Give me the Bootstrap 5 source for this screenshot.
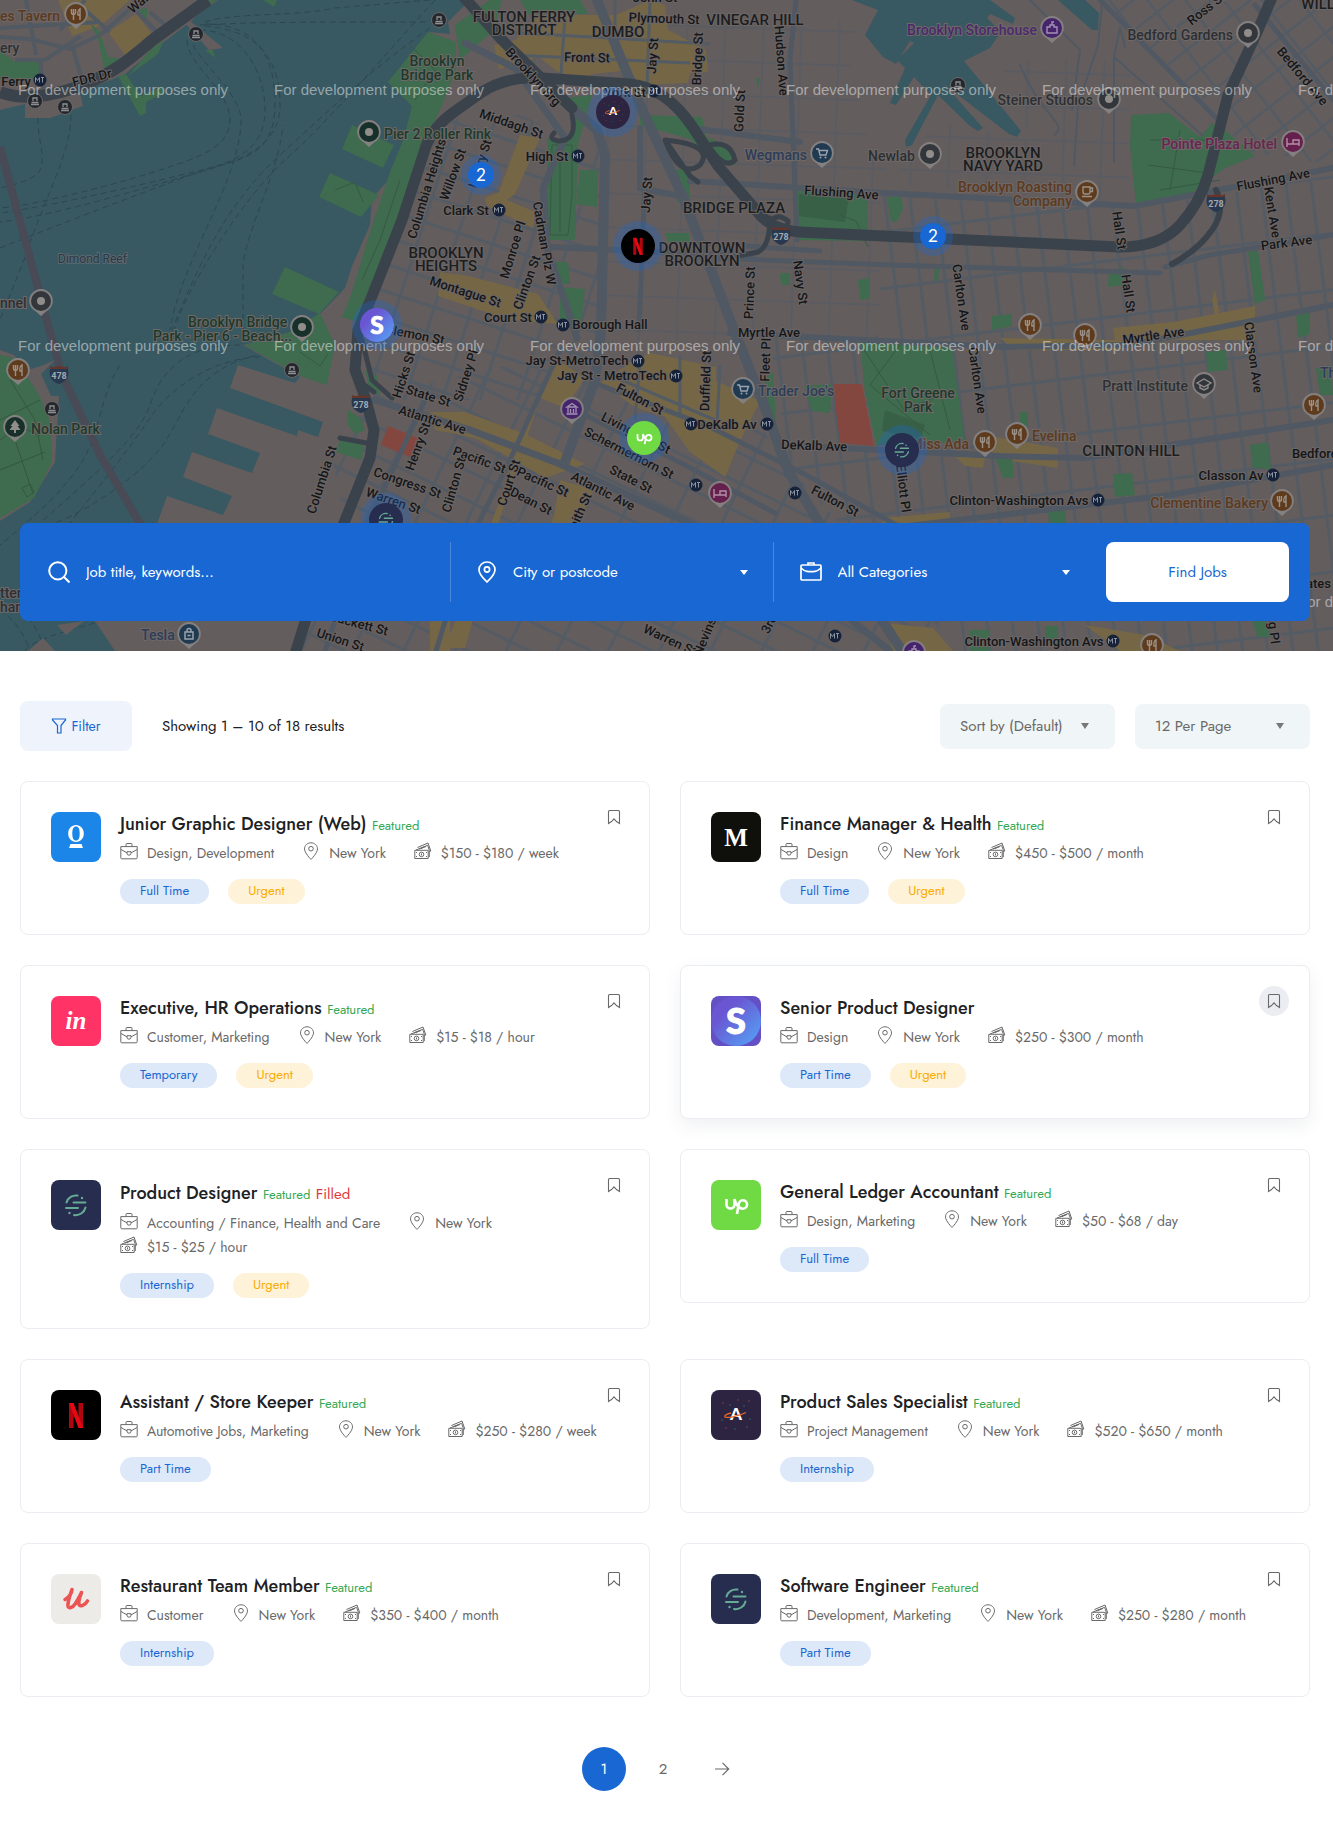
<!DOCTYPE html>
<html lang="en">
<head>
<meta charset="utf-8">
<meta name="viewport" content="width=device-width, initial-scale=1">
<title>Find Jobs</title>
<link href="https://cdn.jsdelivr.net/npm/bootstrap@5.3.0/dist/css/bootstrap.min.css" rel="stylesheet">
<style>
  :root { --brand: #1967d2; --ink: #202124; --muted: #696969; }
  body { font-family: Jost, Lato, sans-serif; font-size: 14px; line-height: 24px; color: var(--muted); background: #fff; }
  .page-pad { padding-left: 20px; padding-right: 23px; }
  .sprite { position: absolute; width: 0; height: 0; }

  /* map hero */
  .map-hero { position: relative; min-height: 651px; padding-bottom: 30px; background: #385862; overflow: hidden; }
  .map-art { position: absolute; inset: 0; width: 100%; height: 100%; }
  .map-art text { font-family: Roboto, sans-serif; }
  .lbl text { font-size: 13px; font-weight: 500; fill: #14171a; stroke: #6c6564; stroke-width: 2px; paint-order: stroke; text-anchor: middle; }
  .area text { font-size: 15px; font-weight: 500; fill: #1b1e21; stroke: #6c6564; stroke-width: 2px; paint-order: stroke; text-anchor: middle; }
  .poi text { font-size: 14px; font-weight: 500; fill: #2c3034; stroke: #6f6867; stroke-width: 2px; paint-order: stroke; }
  .poi .food { fill: #5c3a20; } .poi .shop { fill: #2c3d57; } .poi .fun { fill: #4a2a6b; } .poi .stay { fill: #6a2450; } .poi .green { fill: #1d3a2b; } .poi .reef { fill: #2d3747; font-size: 12px; font-weight: 400; stroke: #5b686d; }
  .poi .end { text-anchor: end; } .poi .mid { text-anchor: middle; }
  .map-art .wm text { font: 15px "Liberation Sans", Arial, sans-serif; fill: #fff; fill-opacity: .48; }
  .map-art .num { font: 17px Lato, sans-serif; fill: #fff; text-anchor: middle; }

  /* search bar */
  .search-bar { position: relative; background: var(--brand); border-radius: 8px; padding: 19px 0; color: #fff; }
  .search-cell { height: 60px; padding-left: 28px; padding-right: 24px; gap: 16px; }
  .search-cell + .search-cell { border-left: 1px solid #4a87dc; padding-left: 26px; }
  .search-cell svg { height: 22px; flex: none; }
  .search-cell .form-control, .search-cell .form-select { background-color: transparent; border: 0; padding: 0; color: #fff; font-size: 15px; box-shadow: none; height: 60px; border-radius: 0; }
  .search-cell .form-control::placeholder { color: #fff; opacity: 1; }
  .search-cell .form-select { background-image: url("data:image/svg+xml,%3Csvg xmlns='http://www.w3.org/2000/svg' viewBox='0 0 8 5'%3E%3Cpath fill='%23fff' d='M0 0h8L4 5z'/%3E%3C/svg%3E"); background-size: 8px 5px; background-position: right 1px center; }
  .search-cell option { color: var(--ink); }
  .search-action { padding: 0 21px 0 11px; }
  .btn-find { height: 60px; border-radius: 8px; background: #fff; color: var(--brand); font-size: 15px; }
  .btn-find:hover { background: #eef4fd; color: var(--brand); }

  /* toolbar */
  .toolbar { padding-top: 50px; margin-bottom: 30px; }
  .btn-filter { width: 112px; height: 50px; border-radius: 8px; background: #eef3fc; color: var(--brand); font-size: 14px; }
  .result-count { color: var(--ink); font-size: 15px; margin-left: 30px; }
  .tool-group { gap: 20px; }
  .tool-select { width: 175px; height: 45px; border: 0; border-radius: 8px; color: var(--muted); font-size: 15px; padding: 0 36px 0 20px; background-color: #f0f5f7; background-size: 8px 6px; background-position: right 26px center;
    background-image: url("data:image/svg+xml,%3Csvg xmlns='http://www.w3.org/2000/svg' viewBox='0 0 8 6'%3E%3Cpath fill='%23777' d='M0 0h8L4 6z'/%3E%3C/svg%3E"); }

  /* job cards */
  .job-list { --bs-gutter-x: 30px; --bs-gutter-y: 30px; margin-top: -30px; }
  .job-card { position: relative; border: 1px solid #ecedf2; border-radius: 8px; padding: 30px; gap: 19px; background: #fff; }
  .job-card.is-active { box-shadow: 0 7px 18px rgba(64, 79, 104, .08); }
  .job-logo { width: 50px; height: 50px; flex: none; border-radius: 8px; }
  .job-title { font-size: 18px; line-height: 24px; margin-bottom: 5px; color: var(--ink); font-weight: 500; }
  .job-title a { color: inherit; text-decoration: none; }
  .job-title span { line-height: 16px; }
  .job-title.tall { line-height: 26px; }
  .flag-featured { font-size: 13px; font-weight: 400; color: #34a853; }
  .flag-filled { font-size: 15px; font-weight: 400; color: #e1383b; }
  .job-meta { column-gap: 28px; margin-bottom: 14px; font-size: 14px; }
  .job-meta span { display: flex; align-items: center; height: 24px; }
  .job-meta svg { width: 18px; height: 18px; margin-right: 9px; margin-bottom: 4px; }
  .job-tags { gap: 19px; }
  .job-tag { height: 25px; line-height: 24px; padding: 0 20px; border-radius: 25px; font-size: 13px; text-decoration: none; background: #dde8f8; color: var(--brand); }
  .job-tag.urgent { background: #fef2d9; color: #f9ab00; }
  .btn-save { position: absolute; top: 20px; right: 20px; width: 30px; height: 30px; border: 0; border-radius: 50%; background: none; color: var(--muted); }
  .btn-save svg { width: 14px; height: 16px; }
  .is-active .btn-save { background: #ecedf2; }

  .pager { margin: 50px 0; gap: 16px; font-size: 15px; padding-right: 4px; }
  .pager .page-item .page-link { width: 44px; height: 44px; padding: 0; border: 0; border-radius: 50%; color: var(--muted); background: none; font-size: 15px; }
  .pager .page-item.active .page-link { background: var(--brand); color: #fff; }
</style>
<script src="https://cdn.jsdelivr.net/npm/bootstrap@5.3.0/dist/js/bootstrap.bundle.min.js" defer></script>
</head>
<body>

<svg class="sprite" aria-hidden="true">
  <defs>
    <linearGradient id="gS" x1="0" y1="0" x2="1" y2="1"><stop offset=".3" stop-color="#6a56d2"/><stop offset="1" stop-color="#53a7f8"/></linearGradient>
  </defs>
  <!-- interface icons -->
  <symbol id="i-case" viewBox="0 0 18 18" fill="none" stroke="currentColor"><path d="M.8 4.6h16.4v11.2a1 1 0 0 1-1 1H1.800a1 1 0 0 1-1-1zM6 4.300V2.500a1 1 0 0 1 1-1h4a1 1 0 0 1 1 1v1.800M1 7.500l6 3.400M17 7.500l-6 3.400M7 9.700h4v1.500a2 2 0 0 1-4 0z"/></symbol>
  <symbol id="i-pin" viewBox="0 0 18 18" fill="none" stroke="currentColor"><path d="M9 .8C5.300.8 2.500 3.500 2.500 6.900 2.500 11 9 17.400 9 17.400S15.500 11 15.500 6.900C15.500 3.500 12.700.8 9 .8z"/><circle cx="9" cy="6.700" r="2.300"/></symbol>
  <symbol id="i-cash" viewBox="0 0 18 18" fill="none" stroke="currentColor"><path d="M.8 8.300h13.400v8.200H.8zM2 8 13.600 3.300l1.700 4.800v7M3.500 5.500 14 1l2.800 8-1.500.7"/><circle cx="7.500" cy="12.400" r="2.300"/><path d="M2.500 10v1M12.500 10v1M2.500 14v1M12.500 14v1M5 7l5-2M7 6.500l5-2M7.500 11.400v2"/></symbol>
  <symbol id="i-mark" viewBox="0 0 14 16" fill="none" stroke="currentColor"><path d="M1.500 14.500v-12a1 1 0 0 1 1-1h9a1 1 0 0 1 1 1v12L9.500 12.500 7 9.800 4.500 12.500z" stroke-width="1.100"/></symbol>
  <!-- company marks -->
  <symbol id="l-o" viewBox="0 0 50 50"><rect width="50" height="50" fill="#1c86e8"/><path fill-rule="evenodd" d="M25 13c4.500 0 7.800 3.600 7.800 8.500S29.500 30 25 30s-7.800-3.600-7.800-8.500S20.500 13 25 13zm0 1.500c-2.600 0-3.700 2.600-3.700 7s1.100 7 3.700 7 3.700-2.600 3.700-7-1.100-7-3.700-7zM18 36l1.500-4h11l1.500 4z" fill="#fff"/></symbol>
  <symbol id="l-m" viewBox="0 0 50 50"><rect width="50" height="50" fill="#0f0f0b"/><text x="25" y="33.500" text-anchor="middle" font-family="Liberation Serif" font-weight="bold" font-size="25" fill="#fff">M</text></symbol>
  <symbol id="l-in" viewBox="0 0 50 50"><rect width="50" height="50" fill="#ff3366"/><text x="25" y="33" text-anchor="middle" font-family="Liberation Serif" font-style="italic" font-weight="bold" font-size="25" fill="#fff">in</text></symbol>
  <symbol id="l-s" viewBox="0 0 50 50"><rect width="50" height="50" fill="#6350c4"/><circle cx="25" cy="25" r="25" fill="url(#gS)"/><text x="25" y="38" text-anchor="middle" font-family="Lato" font-weight="900" font-size="36" fill="#fff" stroke="#fff">S</text></symbol>
  <symbol id="l-seg" viewBox="0 0 50 50"><rect width="50" height="50" fill="#262d4f"/><g fill="none" stroke="#66ac94" stroke-width="2" stroke-linecap="round"><path d="M15.500 22.500a10 10 0 0 1 11-7M34.500 27.500a10 10 0 0 1-11.500 7.500M22.500 22.500h12M15 28h12"/></g><circle cx="31" cy="18" r="1.200" fill="#66ac94"/><circle cx="18.500" cy="33" r="1.200" fill="#66ac94"/></symbol>
  <symbol id="l-up" viewBox="0 0 50 50"><rect width="50" height="50" fill="#6fda44"/><path d="M15.500 19v5.500a4 4 0 0 0 8 0V19c1 4 3 7.500 5.500 9.500M26 34l1.800-10.500a4.200 4.200 0 1 1 4 5.200c-2 0-3.500-1-5-3" fill="none" stroke="#fff" stroke-width="2.600"/></symbol>
  <symbol id="l-n" viewBox="0 0 50 50"><rect width="50" height="50"/><rect x="18" y="13" width="4.500" height="25" fill="#b1060f"/><rect x="27.500" y="13" width="4.500" height="25" fill="#b1060f"/><path d="M18 13h4.500L32 38h-4.500z" fill="#e50914"/></symbol>
  <symbol id="l-a" viewBox="0 0 50 50"><rect width="50" height="50" fill="#2c2440"/><g fill="#a14a3d"><circle cx="12" cy="13" r=".7"/><circle cx="38" cy="11" r=".7"/><circle cx="36" cy="37" r=".7"/><circle cx="15" cy="38" r=".7"/><circle cx="27" cy="10" r=".7"/></g><g fill="#2b7a6c"><circle cx="19" cy="15" r=".7"/><circle cx="33" cy="16" r=".7"/><circle cx="11" cy="30" r=".7"/><circle cx="39" cy="29" r=".7"/><circle cx="24" cy="39" r=".7"/></g><text x="25" y="30" text-anchor="middle" font-family="Lato" font-weight="900" font-size="17" fill="#fff">A</text><path d="M20 23c-5 1-7 3-6 4 3 1.500 14-1 21-4.500" fill="none" stroke="#e8682c" stroke-width="1.300"/></symbol>
  <symbol id="l-u" viewBox="0 0 50 50"><rect width="50" height="50" fill="#edebe7"/><path d="M14 25.500c4-2 6.500-5.500 7-10-2 6-4.500 12-4 16.500.5 3 4.500 2 7.500-2.500 2-3.300 4.500-7.500 6-11-2 5-3.500 9-2.500 12 1 2.500 6 1 8.500-3.500" fill="none" stroke="#ec5453" stroke-width="3.600" stroke-linecap="round" stroke-linejoin="round"/></symbol>
</svg>

<header class="map-hero d-flex flex-column justify-content-end page-pad">
<svg class="map-art" viewBox="0 0 1333 651" preserveAspectRatio="xMidYMid slice" role="img" aria-label="Map of jobs in Brooklyn">
  <defs>
    <pattern id="gH" width="36" height="26" patternUnits="userSpaceOnUse" patternTransform="rotate(18)"><path d="M0 2H36M4 0V26" stroke="#535b64" stroke-width="3"/></pattern>
    <pattern id="gB" width="46" height="27" patternUnits="userSpaceOnUse" patternTransform="rotate(26)"><path d="M0 2H46M4 0V27" stroke="#535b64" stroke-width="3"/></pattern>
    <pattern id="gD" width="38" height="34" patternUnits="userSpaceOnUse" patternTransform="rotate(2)"><path d="M0 2H38M4 0V34" stroke="#555b63" stroke-width="2.500"/></pattern>
    <pattern id="gC" width="25" height="56" patternUnits="userSpaceOnUse" patternTransform="rotate(-7)"><path d="M0 2H25M4 0V56" stroke="#535b64" stroke-width="3"/></pattern>
    <pattern id="gW" width="30" height="24" patternUnits="userSpaceOnUse" patternTransform="rotate(-38)"><path d="M0 2H30M4 0V24" stroke="#535b64" stroke-width="2.500"/></pattern>
    <g id="mta"><circle r="6.500" fill="#16223a"/><path d="M-4.500 2.500v-5l2 3 2-3v5M1 -2.500h3M2.500-2.500v5" fill="none" stroke="#8b93a1"/></g>
    <g id="boat"><circle r="7.500" fill="#24282e" stroke="#6b6868"/><path d="M-4 3.500h8M-3.500 1.500h7M-2 0v-3h4v3" fill="none" stroke="#8e8e8e" stroke-width="1.300"/></g>
    <g id="drop"><path d="M0 15l-5-4.500a11.800 11.800 0 1 1 10 0z" fill="#858080"/><circle r="10" fill="currentColor"/></g>
    <g id="food" color="#5f3b1d"><use href="#drop"/><path d="M-4.500-5v3.500a2 2 0 0 0 4 0V-5M-2.500-5V6M4 6V-5c-2 1-2.500 4-2 6h2" fill="none" stroke="#9b9188" stroke-width="1.400"/></g>
    <g id="dot" color="#33373b"><use href="#drop"/><circle r="4" fill="#918d8b"/></g>
    <g id="dotg" color="#17302a"><use href="#drop"/><circle r="4" fill="#918d8b"/></g>
    <g id="shop" color="#203a52"><use href="#drop"/><path d="M-6-4h2.500l1.500 6h6l1.500-4.500h-8" fill="none" stroke="#9aa3ad" stroke-width="1.400"/><circle cx="-1.500" cy="4.500" r="1" fill="#9aa3ad"/><circle cx="3.500" cy="4.500" r="1" fill="#9aa3ad"/></g>
    <g id="castle" color="#45246b"><use href="#drop"/><path d="M-5 5v-6h3v-2h4v2h3v6zM0-3v-3h2" fill="none" stroke="#a392b5" stroke-width="1.400"/></g>
    <g id="bed" color="#66204d"><use href="#drop"/><path d="M-6-4V5M-6 2H6M6 4V-2H0V2" fill="none" stroke="#b38fa6" stroke-width="1.400"/></g>
    <g id="shield"><path d="M-9-5H9C11 4 6 8 0 10-6 8-11 4-9-5z" fill="#27384f"/><path d="M-9-8l3 1.200L0-8l6 1.200L9-8v3H-9z" fill="#63352b"/></g>
  </defs>
  <rect width="1333" height="651" fill="#385862"/>

  <!-- ferry routes -->
  <g fill="none" stroke="#2c4750" stroke-dasharray="6 4">
    <path d="M200 25C260 22 300 22 428 22M205 24c50 0 70 30 70 80s-30 55-70 65S60 205 0 213M205 26c60 5 75 40 75 80s-40 55-80 66S60 215 0 222M200 30c40 0 65 40 65 80s-30 50-60 60S50 228 0 248"/>
    <path d="M187 40c0 25 43 50 43 80s-40 40-70 50S40 205 0 208M193 45c10 20 48 50 48 75 0 60-60 140-71 210M430 28C370 70 330 110 280 155S200 260 172 330M435 0C380 60 330 120 285 160S180 300 175 330M243 330v-65c5-40 35-90 40-140M38 118c0 20 5 30 4 45s-20 20-42 25M71 115c0 40-30 90-45 140L0 320M205 22c30-10 90-5 130-14L430 0"/>
    <path d="M240 345c-60 0-80 30-90 60S100 470 40 523M275 352c-80 10-90 60-110 90S90 510 55 523M290 358c-70-10-120 30-140 60s-60 80-80 105M120 365c-20 30-20 70-40 100S30 520 0 545M0 590c20 10 40 40 45 61M0 610c15 10 25 25 30 41M25 651c5-10 40-20 70-28"/>
  </g>
  <path d="M0 147l48 178 14 50 38 80 42 72" fill="none" stroke="#484b56" stroke-width="8"/>

  <!-- lower Manhattan -->
  <path d="M0 0H218L200 13 190 22 160 45 125 74 80 93 83 106 50 118H25V104L0 110zM184 22l5-2 34 28-14 2z" fill="#645d5d"/>
  <g fill="#756746"><path d="M58 0h72l-30 26-28 10zM108 32l28-18 16 20-27 21zM98 36l4-1 6 32-3 1z"/></g>
  <g fill="#3f6b4f"><path d="M0 50l15 12h25v17H0zM90 23l10 9 8 25 16 2-20 9-6-30zM135 10l12-2 0 12zM118 76l8-2 14 22 22-9 2 6-18 9 0 11-6 3zM150 50l14-10-6 14-30 22zM205 50l8 0 2 8zM0 110l13 6zM195 13l22-13h-8zM263 0h14l-3 7z"/></g>
  <path d="M0 37l30 2 40 10 30-14 30-26M15 60l30 0 36-24M40 60l4 33M72 45l10 35M0 28l100-6M26 0l10 55M60 30L85 0M85 10l25 22M130 5l28 28M150 12l20 17" fill="none" stroke="#515962" stroke-width="4"/>
  <path d="M0 92c20 8 50 6 85-8s50-30 70-46L208 0" fill="none" stroke="#3a434b" stroke-width="12"/>

  <!-- Governors Island -->
  <path d="M0 350l14 5 14 15 13-4 14-6-14 14 10 22 8 0-4 66L30 502 0 521z" fill="#645d5d"/>
  <path d="M0 355l12 2 14 17 14 23 10 25 2 40-18 36-34 20z" fill="#3f6b4f"/>
  <path d="M0 440l20-14 20 10M10 380l25 40 8 40M0 470l45-18M15 440l18 54M0 420l40-20M22 488l8-4 4 8-7 5z" fill="none" stroke="#35573f"/>

  <!-- Brooklyn and the container piers -->
  <path d="M470 0L448 22 450 34 430 32 388 82 413 103 405 140 396 172 372 198 370 225 352 266 345 288 322 312 290 332 243 345 300 377 295 383 238 365 230 388 217 408 208 434 192 452 183 477 167 496 158 521 150 560 95 621 115 651H1333V0z" fill="#645d5d"/>
  <path d="M57 625l27-4-18 14zM28 651l15-13 12 13z" fill="#645d5d"/>
  <path d="M230 388l93 34-5 15-20-7-1 6-80-28zM208 434l52 19-8 20-60-21zM183 477l49 19-9 19-56-19z" fill="#385862"/>
  <path d="M525 0h30v6q-15 8-25 0zM852 0H990l25 18-2 6-23-10-3 4 14 14-11 16-26 13 57 70-4 6-8-3-65-50 39 44-5 3-8-5-32-31-26 50-6 2-1-7 26-45-17-18-18 28-6-2 15-35-8-8 17-17-4-2-14 23-13-7-18-22 13-25zM1058 0h27l14 13-1 17-6 0z" fill="#385862"/>

  <!-- street grids -->
  <path d="M445 120L520 115 600 150 600 350 580 400 380 400 362 340 400 230z" fill="url(#gH)"/>
  <path d="M330 450L375 395 600 345 740 400 800 480 930 620 940 651H300L345 520z" fill="url(#gB)"/>
  <path d="M500 20H860L850 60 870 150 900 185 1130 205V60H1000L1030 140 940 120 880 190V340H600L600 150z" fill="url(#gD)" opacity=".6"/>
  <path d="M880 190L1140 208 1333 175V651H960L790 470 770 340 880 335z" fill="url(#gC)"/>
  <path d="M1100 0H1333V165L1240 150 1225 120z" fill="url(#gW)"/>

  <!-- commercial blocks -->
  <g fill="#756746">
    <path d="M494 45l22-5 20-25 80 0 34-15 15 5 3 25 38 20 2 22-18 1-2 10-48 2-10-15-38 4-10 12-25-15-18-14-40 12zM520 135l20 3-25 56-8 6 28 12-2 16-46-22-2-8 14-6zM440 272l28 4 70 18 20 30-48-4-72-24zM600 383l30-20 20-10 66 14v14l44 20-20 40-15 36-35-25-25-35-30-10-35-24zM555 358l30 20-20 30-25-10-40 120-15 60-20 70h-20l30-80 40-110zM430 412l35 0 60 22 60 30-40 14-70-40-40-8zM560 480l34 10-30 60-20-5 10-30zM1000 338l115 2-2-12 60-6 82-16v34l-80 0-60 10-100 0zM955 456l30 2-2 10-18-2zM990 436l68 12 0 20-65-10zM883 518l67-6v11h-67zM883 623l50 5 20 23h-60zM1085 625l60 10 35 16h-60zM430 610l20 0v41h-20zM1212 300l3-10 4 20-3 10z"/>
  </g>
  <g fill="none" stroke="#535b64" stroke-width="3"><path d="M500 32l110 6 100 6M510 55l180 8M565 15l-4 60M615 0v40M650 0l-3 90M610 375l105 45M640 360l-5 60M680 355v60M720 365l-3 60"/></g>

  <!-- parks -->
  <g fill="#3f6b4f">
    <path d="M428 32l28 10 0 26-14 38-22 44-20 62-22 80-20 30-16-5 10-25 18-60 20-60 14-34 8-32-24-24zM455 25l35-25 12 0-8 30-34 30zM520 0h60l8 14-60 0zM352 125l42 20-11 23-41-19zM330 173l49 22-18 22-42-20zM285 267l54 25-20 22-47-20zM245 345l45-13 30-19 15 32-8 40-27-9zM550 100l26 12-8 30-20-4-2 102 28 0 4-95 14-50zM580 170l18 0-1 37-21-3zM545 240h30l3-100h-28zM556 262h12l2 22h-12zM560 287l25 2-5 42-20-6zM640 115l62 2 4 20 26 10 4 18-20-2-26-24-50-14zM670 172l20-6 0 36-12 0zM665 233h24v10h-20zM797 190l70 4 1 47-70-1zM1131 115l38-2 31 24 12-14 14 8 29 25-30 12-32 24-57 14-6-60zM860 338l92 10 13 94-89 3-12-60zM832 384l-28 2 8 25 18 2zM765 378l8-6 4 68-10-10zM1109 270l16-2v17l-17 2zM1248 252l10-2 7 50-10 4zM1206 352l20-2 2 20-20 2zM1113 474l19-1 3 22-20 2zM1250 445l18-3 3 28-19-3zM995 457l17 0 2 21-11 0zM1316 368l15-3 2 30-13 0zM887 197l14 0 2 10-5 14-7 1zM935 264l5 0-2 18-4-2zM992 316l20-2v12l-20 4zM1020 412l8 0 0 18-8-4zM348 410l12 8 5 12-10 4-8-10zM340 440l24 2-2 18-26-8zM1048 511l18 0v12h-16zM970 630l20 0v21h-20zM1045 626l13 0 0 20-12-3zM1252 621l14 0 6 16-14 0zM1296 316l14-4 0 22-12 4zM780 273l10 0v12h-9zM858 280l12-2v20l-10 2zM756 78l4 0-2 10zM365 370l12 6 3 20-10-6z"/>
  </g>
  <g fill="#386047"><path d="M799 194l50 2-4 26-46-6zM885 410l40 15-5 14-38-8z"/></g>
  <path d="M552 145h20v50l-4 40h-18zM560 150v82M840 215l16 6 12 26M864 350l40 60 50-20M900 345l-30 40 60 50M930 350l20 80M410 45l25 25-20 30M400 180l-20 60-18 40M335 190l20-8 8 20M1180 130l-10 60M1150 140h60M1148 165l60 8M1160 190l60-10M300 352l20 14 8-12" fill="none" stroke="#355a44"/>
  <g fill="#84473f"><path d="M833 384h29l12 62-34-3zM388 426l30 12-8 19-29-12z"/></g>

  <!-- major roads -->
  <g fill="none" stroke="#505963" stroke-linecap="round">
    <path d="M690 181l195 12 250 13 198-38M730 333l270 14 130-2 203-40M800 446l200 10 85 2 248-38M840 530l60-3 270-32 163-30M550 247l200 9M690 128l110 14M640 128l0 60 40 8" stroke-width="6"/>
    <path d="M465 43l50 25 50 70-22 50 4 60 30 90M375 400l95 30 90 34 120 55 120 60 90 72" stroke-width="7"/>
    <path d="M572 108l25 22 8 25-4 175-6 50-30 82M595-5l45 110 42 90 54 140 28 70 24 66 36 60 78 120" stroke-width="10"/>
    <path d="M600 385l110 42 100 50 90 50M575 410l110 55 90 48M645 180l-6 150M796 0l-6 60 7 180M560 350l-50 110-40 80-34 111M425 400l-60 130-40 121M1100 0l120 122M1255 5l78 95M1165 267l45-12 123-20M690 257l200 8 270 8M700 243l120 8" stroke-width="5"/>
    <path d="M1102 5l-4 40-20 60-4 60M1114 57l88 78M1114 57v105M1114 57l6-30 5 20M1020 65c20 50 50 60 34 70M1030 0l50 50-8 60" stroke-width="2"/>
  </g>
  <g fill="none" stroke="#3a434b" stroke-linecap="round">
    <path d="M296 651l14-45 36-88 24-60 4-28-8-30-11-30 3-40 14-34 30-76 24-74q8-20 28-34l28-20q25-16 60-14l88 6q35 3 62 42l26 40 38 44q14 20 44 22l83 4 237 11q40 0 60-22t28-50l20-80 30-65 30-70" stroke-width="11"/>
    <path d="M462-5l40 45 70 68" stroke-width="11"/>
    <path d="M572 115q6 26-14 26-10-2-4-8M665 140q50 5 35 25-20 15-35-25l25 36 8 6M710 145q20-5 25 15-10 10-25-12M770 218q0 28-12 34l-20 4M770 225q5-14 18-4 0 10-8 12M340 438l32 6M358 380l16 12M362 340l10 40 20 18" stroke-width="5"/>
    <path d="M1216 190q10 20-4 40t-40 34" stroke-width="6"/>
  </g>

  <!-- street names -->
  <g class="lbl">
    <text transform="translate(142 6) rotate(-40)">Wall</text><text transform="translate(93 82) rotate(-14)" font-size="12">FDR Dr</text><text x="16" y="86">Ferry</text>
    <text transform="translate(431 190) rotate(-73)">Columbia Heights</text><text transform="translate(457 176) rotate(-70)">Willow St</text><text transform="translate(484 165) rotate(-72)">Henry St</text>
    <text x="655" y="2">John St</text><text transform="translate(664 23) rotate(2)">Plymouth St</text><text transform="translate(587 62) rotate(1)">Front St</text>
    <text transform="translate(657 56) rotate(-86)">Jay St</text><text transform="translate(702 59) rotate(-88)">Bridge St</text><text transform="translate(777 61) rotate(86)">Hudson Ave</text><text transform="translate(744 111) rotate(-87)">Gold St</text>
    <text transform="translate(530 80) rotate(47)">Brooklyn Brg</text><text transform="translate(510 128) rotate(19)">Middagh St</text><text x="625" y="97">York St</text>
    <text x="547" y="161">High St</text><text x="466" y="215">Clark St</text><text transform="translate(540 244) rotate(80)">Cadman Plz W</text><text transform="translate(651 195) rotate(-86)">Jay St</text>
    <text transform="translate(841 197) rotate(4)">Flushing Ave</text><text transform="translate(517 251) rotate(-73)">Monroe Pl</text><text transform="translate(531 284) rotate(-70)">Clinton St</text><text transform="translate(464 296) rotate(18)">Montague St</text>
    <text x="508" y="322">Court St</text><text x="610" y="329">Borough Hall</text><text transform="translate(754 293) rotate(-88)">Prince St</text><text transform="translate(796 283) rotate(82)">Navy St</text>
    <text transform="translate(1209 12) rotate(-38)">Ross St</text><text transform="translate(1299 79) rotate(50)">Bedford Ave</text><text transform="translate(1274 184) rotate(-11)">Flushing Ave</text><text transform="translate(1268 213) rotate(81)">Kent Ave</text><text transform="translate(1287 247) rotate(-7)">Park Ave</text>
    <text transform="translate(1115 231) rotate(82)">Hall St</text><text transform="translate(1124 294) rotate(82)">Hall St</text><text transform="translate(957 298) rotate(82)">Carlton Ave</text><text transform="translate(973 381) rotate(82)">Carlton Ave</text>
    <text transform="translate(408 376) rotate(-72)">Hicks St</text><text transform="translate(427 400) rotate(17)">State St</text><text transform="translate(431 424) rotate(17)" font-size="14">Atlantic Ave</text><text transform="translate(422 448) rotate(-70)">Henry St</text><text transform="translate(326 481) rotate(-72)" font-size="14">Columbia St</text>
    <text transform="translate(406 487) rotate(19)">Congress St</text><text transform="translate(392 505) rotate(19)">Warren St</text><text transform="translate(414 339) rotate(11)">Clemon St</text><text transform="translate(470 377) rotate(-72)">Sidney Pl</text>
    <text transform="translate(339 644) rotate(18)">Union St</text><text transform="translate(358 628) rotate(15)">Sackett St</text>
    <text x="769" y="337">Myrtle Ave</text><text transform="translate(770 360) rotate(-88)">Fleet Pl</text><text x="577" y="365">Jay St-MetroTech</text><text x="612" y="380">Jay St - MetroTech</text><text transform="translate(638 403) rotate(28)">Fulton St</text><text transform="translate(710 381) rotate(-88)">Duffield St</text>
    <text transform="translate(634 437) rotate(27)">Livingston St</text><text transform="translate(627 457) rotate(27)">Schermerhorn St</text><text x="727" y="429">DeKalb Av</text><text transform="translate(814 450) rotate(2)">DeKalb Ave</text><text transform="translate(629 483) rotate(27)">State St</text><text transform="translate(601 495) rotate(27)" font-size="14">Atlantic Ave</text>
    <text transform="translate(478 464) rotate(20)">Pacific St</text><text transform="translate(541 486) rotate(24)">Pacific St</text><text transform="translate(529 505) rotate(27)">Dean St</text><text transform="translate(458 486) rotate(-74)">Clinton St</text><text transform="translate(513 484) rotate(-72)" font-size="14">Court St</text><text transform="translate(582 518) rotate(-66)" font-size="14">Smith St</text>
    <text transform="translate(833 505) rotate(28)">Fulton St</text><text transform="translate(668 644) rotate(25)">Warren St</text><text transform="translate(709 638) rotate(-68)">Nevins</text><text transform="translate(773 626) rotate(-62)">3rd</text>
    <text transform="translate(1154 340) rotate(-8)">Myrtle Ave</text><text transform="translate(1249 358) rotate(82)">Classon Ave</text><text transform="translate(899 489) rotate(83)">Elliott Pl</text><text x="1231" y="480">Classon Av</text><text x="1019" y="505">Clinton-Washington Avs</text><text x="1034" y="646">Clinton-Washington Avs</text><text x="1324" y="458">Bedford Av</text><text x="1314" y="588">Gates</text><text transform="translate(1269 628) rotate(83)">ing Pl</text>
  </g>
  <g class="area">
    <text x="524" y="22">FULTON FERRY</text><text x="524" y="35">DISTRICT</text><text x="618" y="37">DUMBO</text><text x="755" y="25">VINEGAR HILL</text><text x="446" y="258">BROOKLYN</text><text x="446" y="271">HEIGHTS</text><text x="734" y="213">BRIDGE PLAZA</text><text x="702" y="253">DOWNTOWN</text><text x="702" y="266">BROOKLYN</text><text x="1003" y="158">BROOKLYN</text><text x="1003" y="171">NAVY YARD</text><text x="1131" y="456">CLINTON HILL</text><text x="1318" y="9">WILL</text>
  </g>
  <g class="poi">
    <text class="food" x="0" y="21">es Tavern</text><text x="0" y="53">ery</text><text class="reef" x="58" y="263">Dimond Reef</text><text x="0" y="308">nnel</text>
    <text class="green mid" x="437" y="66">Brooklyn</text><text class="green mid" x="437" y="80">Bridge Park</text><text class="green" x="384" y="139">Pier 2 Roller Rink</text><text class="green" x="188" y="327">Brooklyn Bridge</text><text class="green" x="153" y="341">Park - Pier 6 - Beach...</text>
    <text class="shop end" x="807" y="160">Wegmans</text><text x="868" y="161">Newlab</text><text class="fun end" x="1037" y="35">Brooklyn Storehouse</text><text class="end" x="1233" y="40">Bedford Gardens</text><text class="end" x="1093" y="105">Steiner Studios</text><text class="stay end" x="1277" y="149">Pointe Plaza Hotel</text><text class="food end" x="1072" y="192">Brooklyn Roasting</text><text class="food end" x="1072" y="206">Company</text>
    <text class="green" x="31" y="434">Nolan Park</text><text class="shop" x="141" y="640">Tesla</text><text class="shop" x="758" y="396">Trader Joe's</text><text class="end" x="1188" y="391">Pratt Institute</text><text class="shop" x="1320" y="378">Th</text><text class="green mid" x="918" y="398">Fort Greene</text><text class="green mid" x="918" y="412">Park</text><text class="food" x="1032" y="441">Evelina</text><text class="food end" x="969" y="449">Miss Ada</text><text class="food end" x="1268" y="508">Clementine Bakery</text>
    <text x="0" y="598">tter</text><text x="0" y="612">han</text>
  </g>

  <!-- places -->
  <use href="#food" x="76" y="14"/><use href="#food" x="18" y="370"/><use href="#food" x="1030" y="325"/><use href="#food" x="1085" y="335"/><use href="#food" x="1314" y="405"/><use href="#food" x="1017" y="434"/><use href="#food" x="985" y="442"/><use href="#food" x="1282" y="501"/><use href="#food" x="1152" y="645"/>
  <g transform="translate(1087 192)" color="#5f3b1d"><use href="#drop"/><path d="M-4-5h7v5a2 2 0 0 1-2 2h-3a2 2 0 0 1-2-2zM3-4h2.500v3.500H3M-5 4.500H5" fill="none" stroke="#9b9188" stroke-width="1.400"/></g>
  <use href="#dot" x="41" y="301"/><use href="#dot" x="930" y="154"/><use href="#dot" x="1248" y="33"/><use href="#dot" x="1109" y="99"/><use href="#dotg" x="369" y="132"/><use href="#dotg" x="302" y="327"/>
  <g transform="translate(15 427)" color="#17302a"><use href="#drop"/><path d="M0-7l4.500 6h-2l3 4h-11l3-4h-2zM-1 3h2v3h-2z" fill="#918d8b"/></g>
  <g transform="translate(1204 384)" color="#33373b"><use href="#drop"/><path d="M-7-1l7-4 7 4-7 4zM-4 1v3l4 2 4-2v-3" fill="none" stroke="#918d8b" stroke-width="1.400"/></g>
  <g transform="translate(189 634)" color="#203a52"><use href="#drop"/><path d="M-4-2h8v7h-8zM-2-2v-1.500a2 2 0 0 1 4 0V-2M-1.500 1.500h3" fill="none" stroke="#9aa3ad" stroke-width="1.500"/></g>
  <g transform="translate(572 409)" color="#45246b"><use href="#drop"/><path d="M-5-2l5-3.500L5-2zM-4-1v5M4-1v5M-1.500 0v4M1.500 0v4M-5.500 5h11" fill="none" stroke="#a392b5" stroke-width="1.300"/></g>
  <use href="#shop" x="822" y="153"/><use href="#shop" x="743" y="389"/><use href="#castle" x="1052" y="28"/><use href="#castle" x="914" y="652"/><use href="#bed" x="1293" y="142"/><use href="#bed" x="720" y="493"/>
  <use href="#mta" x="40" y="80"/><use href="#mta" x="578" y="156"/><use href="#mta" x="499" y="210"/><use href="#mta" x="541" y="317"/><use href="#mta" x="563" y="325"/><use href="#mta" x="654" y="91"/><use href="#mta" x="638" y="361"/><use href="#mta" x="676" y="376"/><use href="#mta" x="691" y="424"/><use href="#mta" x="767" y="424"/><use href="#mta" x="696" y="485"/><use href="#mta" x="795" y="493"/><use href="#mta" x="1273" y="475"/><use href="#mta" x="1098" y="500"/><use href="#mta" x="835" y="636"/><use href="#mta" x="1113" y="641"/>
  <use href="#boat" x="35" y="101"/><use href="#boat" x="65" y="107"/><use href="#boat" x="196" y="34"/><use href="#boat" x="439" y="20"/><use href="#boat" x="52" y="409"/><use href="#boat" x="292" y="370"/><use href="#boat" x="958" y="85"/>
  <g font-size="9" font-weight="700" fill="#a3a9b0" text-anchor="middle"><use href="#shield" x="59" y="374"/><text x="59" y="379">478</text><use href="#shield" x="361" y="403"/><text x="361" y="408">278</text><use href="#shield" x="781" y="235"/><text x="781" y="240">278</text><use href="#shield" x="1216" y="202"/><text x="1216" y="207">278</text></g>

  <g class="wm">
    <text x="18" y="95">For development purposes only</text><text x="274" y="95">For development purposes only</text><text x="530" y="95">For development purposes only</text><text x="786" y="95">For development purposes only</text><text x="1042" y="95">For development purposes only</text><text x="1298" y="95">For development purposes only</text>
    <text x="18" y="351">For development purposes only</text><text x="274" y="351">For development purposes only</text><text x="530" y="351">For development purposes only</text><text x="786" y="351">For development purposes only</text><text x="1042" y="351">For development purposes only</text><text x="1298" y="351">For development purposes only</text>
    <text x="1298" y="607">For development purposes only</text>
  </g>

  <!-- job markers -->
  <g fill="#1967d2" fill-opacity=".3"><circle cx="481" cy="175" r="20"/><circle cx="933" cy="236" r="20"/><circle cx="613" cy="112" r="25"/><circle cx="638" cy="246" r="25"/><circle cx="377" cy="325" r="25"/><circle cx="644" cy="438" r="25"/><circle cx="902" cy="450" r="25"/><circle cx="386" cy="518" r="25"/></g>
  <circle cx="481" cy="175" r="13" fill="#1967d2"/><text class="num" x="481" y="181">2</text>
  <circle cx="933" cy="236" r="13" fill="#1967d2"/><text class="num" x="933" y="242">2</text>
  <defs><clipPath id="disc"><circle r="17"/></clipPath></defs>
  <g transform="translate(613 112)" clip-path="url(#disc)"><use href="#l-a" x="-17" y="-17" width="34" height="34"/></g>
  <g transform="translate(638 246)" clip-path="url(#disc)"><use href="#l-n" x="-17" y="-17" width="34" height="34"/></g>
  <g transform="translate(377 325)" clip-path="url(#disc)"><use href="#l-s" x="-17" y="-17" width="34" height="34"/></g>
  <g transform="translate(644 438)" clip-path="url(#disc)"><use href="#l-up" x="-17" y="-17" width="34" height="34"/></g>
  <g transform="translate(902 450)" clip-path="url(#disc)"><use href="#l-seg" x="-17" y="-17" width="34" height="34"/></g>
  <g transform="translate(386 520)" clip-path="url(#disc)"><use href="#l-seg" x="-17" y="-17" width="34" height="34"/></g>
</svg>

<form class="search-bar row g-0">
  <div class="search-cell col-4 d-flex align-items-center">
    <svg width="22" viewBox="0 0 22 22" fill="none" stroke="currentColor" stroke-width="2" aria-hidden="true"><circle cx="9.800" cy="9.800" r="8.600"/><path d="M16 16l5.500 5.500"/></svg>
    <input type="text" class="form-control" placeholder="Job title, keywords..." aria-label="Job title or keywords">
  </div>
  <div class="search-cell col-3 d-flex align-items-center">
    <svg width="20" viewBox="-1 0 20 22" fill="none" stroke="currentColor" stroke-width="1.700" aria-hidden="true"><path d="M9 1C4.500 1 1 4.400 1 8.800 1 14 6.500 18.500 9 21c2.500-2.500 8-7 8-12.200C17 4.400 13.500 1 9 1z"/><circle cx="9" cy="8.500" r="2.600"/></svg>
    <select class="form-select" aria-label="City or postcode"><option>City or postcode</option><option>New York</option></select>
  </div>
  <div class="search-cell col-3 d-flex align-items-center">
    <svg width="22" viewBox="0 0 22 22" fill="none" stroke="currentColor" stroke-width="1.700" aria-hidden="true"><rect x="1" y="4" width="20" height="15" rx="1"/><path d="M8 4V2h6v2M1 7c2 2 4 3 6 3.300 2.600.5 5.400.5 8 0C17 10 19 9 21 7"/></svg>
    <select class="form-select" aria-label="Category"><option>All Categories</option><option>Design</option><option>Marketing</option></select>
  </div>
  <div class="search-action col-2"><button type="submit" class="btn btn-find w-100">Find Jobs</button></div>
</form>
</header>

<main class="page-pad">
<div class="toolbar d-flex align-items-center">
  <button type="button" class="btn btn-filter p-0 d-flex align-items-center justify-content-center gap-1"><svg width="16" height="16" viewBox="0 0 16 16" fill="none" stroke="currentColor" stroke-width="1.200" aria-hidden="true"><path d="M1.500 1h13v1L10 7.500V15H6.500V7.500L1.500 2z"/></svg>Filter</button>
  <span class="result-count">Showing 1 – 10 of 18 results</span>
  <div class="tool-group d-flex ms-auto">
    <select class="form-select tool-select" aria-label="Sort by"><option>Sort by (Default)</option><option>Newest</option></select>
    <select class="form-select tool-select" aria-label="Jobs per page"><option>12 Per Page</option><option>24 Per Page</option></select>
  </div>
</div>

<div class="job-list row align-items-start">
  <div class="col-6"><article class="job-card d-flex">
    <svg class="job-logo"><use href="#l-o"/></svg>
    <div><h2 class="job-title"><a href="#">Junior Graphic Designer (Web)</a> <span class="flag-featured">Featured</span></h2>
      <div class="job-meta d-flex flex-wrap"><span><svg><use href="#i-case"/></svg>Design, Development</span><span><svg><use href="#i-pin"/></svg>New York</span><span><svg><use href="#i-cash"/></svg>$150 - $180 / week</span></div>
      <div class="job-tags d-flex"><a href="#" class="job-tag">Full Time</a><a href="#" class="job-tag urgent">Urgent</a></div></div>
    <button type="button" class="btn-save p-0 d-flex align-items-center justify-content-center" aria-label="Save job"><svg><use href="#i-mark"/></svg></button>
  </article></div>
  <div class="col-6"><article class="job-card d-flex">
    <svg class="job-logo"><use href="#l-m"/></svg>
    <div><h2 class="job-title"><a href="#">Finance Manager &amp; Health</a> <span class="flag-featured">Featured</span></h2>
      <div class="job-meta d-flex flex-wrap"><span><svg><use href="#i-case"/></svg>Design</span><span><svg><use href="#i-pin"/></svg>New York</span><span><svg><use href="#i-cash"/></svg>$450 - $500 / month</span></div>
      <div class="job-tags d-flex"><a href="#" class="job-tag">Full Time</a><a href="#" class="job-tag urgent">Urgent</a></div></div>
    <button type="button" class="btn-save p-0 d-flex align-items-center justify-content-center" aria-label="Save job"><svg><use href="#i-mark"/></svg></button>
  </article></div>
  <div class="col-6"><article class="job-card d-flex">
    <svg class="job-logo"><use href="#l-in"/></svg>
    <div><h2 class="job-title"><a href="#">Executive, HR Operations</a> <span class="flag-featured">Featured</span></h2>
      <div class="job-meta d-flex flex-wrap"><span><svg><use href="#i-case"/></svg>Customer, Marketing</span><span><svg><use href="#i-pin"/></svg>New York</span><span><svg><use href="#i-cash"/></svg>$15 - $18 / hour</span></div>
      <div class="job-tags d-flex"><a href="#" class="job-tag">Temporary</a><a href="#" class="job-tag urgent">Urgent</a></div></div>
    <button type="button" class="btn-save p-0 d-flex align-items-center justify-content-center" aria-label="Save job"><svg><use href="#i-mark"/></svg></button>
  </article></div>
  <div class="col-6"><article class="job-card is-active d-flex">
    <svg class="job-logo"><use href="#l-s"/></svg>
    <div><h2 class="job-title"><a href="#">Senior Product Designer</a></h2>
      <div class="job-meta d-flex flex-wrap"><span><svg><use href="#i-case"/></svg>Design</span><span><svg><use href="#i-pin"/></svg>New York</span><span><svg><use href="#i-cash"/></svg>$250 - $300 / month</span></div>
      <div class="job-tags d-flex"><a href="#" class="job-tag">Part Time</a><a href="#" class="job-tag urgent">Urgent</a></div></div>
    <button type="button" class="btn-save p-0 d-flex align-items-center justify-content-center" aria-label="Save job"><svg><use href="#i-mark"/></svg></button>
  </article></div>
  <div class="col-6"><article class="job-card d-flex">
    <svg class="job-logo"><use href="#l-seg"/></svg>
    <div><h2 class="job-title tall"><a href="#">Product Designer</a> <span class="flag-featured">Featured</span> <span class="flag-filled">Filled</span></h2>
      <div class="job-meta d-flex flex-wrap"><span><svg><use href="#i-case"/></svg>Accounting / Finance, Health and Care</span><span><svg><use href="#i-pin"/></svg>New York</span><span><svg><use href="#i-cash"/></svg>$15 - $25 / hour</span></div>
      <div class="job-tags d-flex"><a href="#" class="job-tag">Internship</a><a href="#" class="job-tag urgent">Urgent</a></div></div>
    <button type="button" class="btn-save p-0 d-flex align-items-center justify-content-center" aria-label="Save job"><svg><use href="#i-mark"/></svg></button>
  </article></div>
  <div class="col-6"><article class="job-card d-flex">
    <svg class="job-logo"><use href="#l-up"/></svg>
    <div><h2 class="job-title"><a href="#">General Ledger Accountant</a> <span class="flag-featured">Featured</span></h2>
      <div class="job-meta d-flex flex-wrap"><span><svg><use href="#i-case"/></svg>Design, Marketing</span><span><svg><use href="#i-pin"/></svg>New York</span><span><svg><use href="#i-cash"/></svg>$50 - $68 / day</span></div>
      <div class="job-tags d-flex"><a href="#" class="job-tag">Full Time</a></div></div>
    <button type="button" class="btn-save p-0 d-flex align-items-center justify-content-center" aria-label="Save job"><svg><use href="#i-mark"/></svg></button>
  </article></div>
  <div class="col-6"><article class="job-card d-flex">
    <svg class="job-logo"><use href="#l-n"/></svg>
    <div><h2 class="job-title"><a href="#">Assistant / Store Keeper</a> <span class="flag-featured">Featured</span></h2>
      <div class="job-meta d-flex flex-wrap"><span><svg><use href="#i-case"/></svg>Automotive Jobs, Marketing</span><span><svg><use href="#i-pin"/></svg>New York</span><span><svg><use href="#i-cash"/></svg>$250 - $280 / week</span></div>
      <div class="job-tags d-flex"><a href="#" class="job-tag">Part Time</a></div></div>
    <button type="button" class="btn-save p-0 d-flex align-items-center justify-content-center" aria-label="Save job"><svg><use href="#i-mark"/></svg></button>
  </article></div>
  <div class="col-6"><article class="job-card d-flex">
    <svg class="job-logo"><use href="#l-a"/></svg>
    <div><h2 class="job-title"><a href="#">Product Sales Specialist</a> <span class="flag-featured">Featured</span></h2>
      <div class="job-meta d-flex flex-wrap"><span><svg><use href="#i-case"/></svg>Project Management</span><span><svg><use href="#i-pin"/></svg>New York</span><span><svg><use href="#i-cash"/></svg>$520 - $650 / month</span></div>
      <div class="job-tags d-flex"><a href="#" class="job-tag">Internship</a></div></div>
    <button type="button" class="btn-save p-0 d-flex align-items-center justify-content-center" aria-label="Save job"><svg><use href="#i-mark"/></svg></button>
  </article></div>
  <div class="col-6"><article class="job-card d-flex">
    <svg class="job-logo"><use href="#l-u"/></svg>
    <div><h2 class="job-title"><a href="#">Restaurant Team Member</a> <span class="flag-featured">Featured</span></h2>
      <div class="job-meta d-flex flex-wrap"><span><svg><use href="#i-case"/></svg>Customer</span><span><svg><use href="#i-pin"/></svg>New York</span><span><svg><use href="#i-cash"/></svg>$350 - $400 / month</span></div>
      <div class="job-tags d-flex"><a href="#" class="job-tag">Internship</a></div></div>
    <button type="button" class="btn-save p-0 d-flex align-items-center justify-content-center" aria-label="Save job"><svg><use href="#i-mark"/></svg></button>
  </article></div>
  <div class="col-6"><article class="job-card d-flex">
    <svg class="job-logo"><use href="#l-seg"/></svg>
    <div><h2 class="job-title"><a href="#">Software Engineer</a> <span class="flag-featured">Featured</span></h2>
      <div class="job-meta d-flex flex-wrap"><span><svg><use href="#i-case"/></svg>Development, Marketing</span><span><svg><use href="#i-pin"/></svg>New York</span><span><svg><use href="#i-cash"/></svg>$250 - $280 / month</span></div>
      <div class="job-tags d-flex"><a href="#" class="job-tag">Part Time</a></div></div>
    <button type="button" class="btn-save p-0 d-flex align-items-center justify-content-center" aria-label="Save job"><svg><use href="#i-mark"/></svg></button>
  </article></div>
</div>

<nav aria-label="Pages">
  <ul class="pagination pager justify-content-center">
    <li class="page-item active"><a class="page-link d-flex align-items-center justify-content-center" href="#">1</a></li>
    <li class="page-item"><a class="page-link d-flex align-items-center justify-content-center" href="#">2</a></li>
    <li class="page-item"><a class="page-link d-flex align-items-center justify-content-center" href="#" aria-label="Next"><svg width="16" height="16" viewBox="0 0 16 16" fill="none" stroke="currentColor" stroke-width="1.200"><path d="M1 8h13.500M8.500 1.800L14.700 8l-6.200 6.200"/></svg></a></li>
  </ul>
</nav>
</main>
</body>
</html>
